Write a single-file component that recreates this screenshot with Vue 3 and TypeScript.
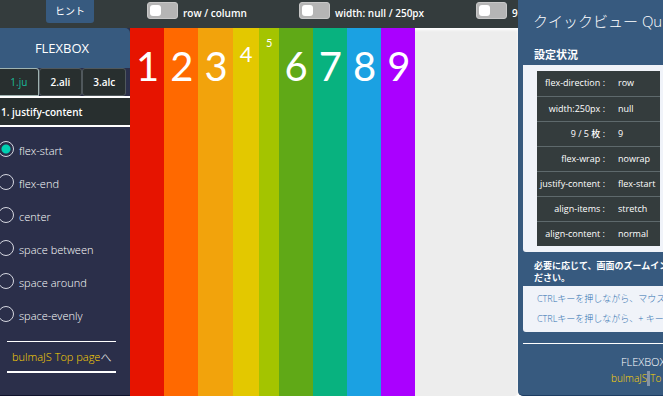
<script setup lang="ts">
import { ref } from 'vue'

interface Item { label: string; color: string; size: string }
interface Setting { name: string; value: string }

const switches = ref([
  { id: 'sw-direction', label: 'row / column', on: false },
  { id: 'sw-width', label: 'width: null / 250px', on: false },
  { id: 'sw-count', label: '9', on: false },
])

const tabs: string[] = ['1.ju', '2.ali', '3.alc']
const activeTab = ref(0)

const options: { value: string; text: string }[] = [
  { value: 'flex-start', text: 'flex-start' },
  { value: 'flex-end', text: 'flex-end' },
  { value: 'center', text: 'center' },
  { value: 'space-between', text: 'space between' },
  { value: 'space-around', text: 'space around' },
  { value: 'space-evenly', text: 'space-evenly' },
]
const justify = ref('flex-start')

const items: Item[] = [
  { label: '1', color: '#e61400', size: 'large' },
  { label: '2', color: '#ff6900', size: 'large' },
  { label: '3', color: '#f2a30c', size: 'large' },
  { label: '4', color: '#e3c800', size: 'medium' },
  { label: '5', color: '#a4c400', size: 'small' },
  { label: '6', color: '#60a917', size: 'large' },
  { label: '7', color: '#08b27f', size: 'large' },
  { label: '8', color: '#1ba1e2', size: 'large' },
  { label: '9', color: '#aa00ff', size: 'large' },
]

const settings: Setting[] = [
  { name: 'flex-direction', value: 'row' },
  { name: 'width:250px', value: 'null' },
  { name: '9 / 5 枚', value: '9' },
  { name: 'flex-wrap', value: 'nowrap' },
  { name: 'justify-content', value: 'flex-start' },
  { name: 'align-items', value: 'stretch' },
  { name: 'align-content', value: 'normal' },
]
</script>

<template>
  <div class="page">
    <div class="workspace">
      <header class="toolbar">
        <div class="hint-cell"><button type="button" class="hint">ヒント</button></div>
        <label v-for="s in switches" :key="s.id" class="switch" :for="s.id">
          <input :id="s.id" v-model="s.on" type="checkbox" role="switch" />
          <span>{{ s.label }}</span>
        </label>
      </header>

      <div class="body">
        <nav class="sidebar">
          <h1 class="side-title">FLEXBOX</h1>
          <div class="tabs">
            <button
              v-for="(t, i) in tabs"
              :key="t"
              type="button"
              :class="['tab', { active: i === activeTab }]"
              @click="activeTab = i"
            >{{ t }}</button>
          </div>
          <h2 class="section">1. justify-content</h2>
          <div class="radios">
            <label v-for="o in options" :key="o.value" class="radio" :for="o.value">
              <input :id="o.value" v-model="justify" type="radio" name="justify" :value="o.value" />
              <span>{{ o.text }}</span>
            </label>
          </div>
          <p class="top-link"><a href="#">bulmaJS Top page</a><span>へ</span></p>
        </nav>

        <main class="stage">
          <div
            v-for="item in items"
            :key="item.label"
            :class="['item', item.size]"
            :style="{ backgroundColor: item.color }"
          >{{ item.label }}</div>
        </main>
      </div>
    </div>

    <aside class="quickview">
      <h2 class="qv-title">クイックビュー Qu</h2>
      <section class="message">
        <h3 class="message-head">設定状況</h3>
        <div class="message-body">
          <table class="settings">
            <tbody>
              <tr v-for="s in settings" :key="s.name">
                <th scope="row">{{ s.name }} :</th>
                <td>{{ s.value }}</td>
              </tr>
            </tbody>
          </table>
        </div>
      </section>
      <section class="message">
        <h3 class="message-head note">必要に応じて、画面のズームイン<br />ださい。</h3>
        <div class="message-body tips">
          <p>CTRLキーを押しながら、マウス</p>
          <p>CTRLキーを押しながら、+ キー</p>
        </div>
      </section>
      <footer class="qv-foot">
        <p>FLEXBOX</p>
        <a href="#">bulmaJS<span class="caret"></span>To</a>
      </footer>
    </aside>
  </div>
</template>

<style>
body {
  margin: 0;
  background: #fff;
}
</style>

<style scoped>
* {
  box-sizing: border-box;
}

.page {
  display: flex;
  min-height: calc(100vh - 12px);
  margin-bottom: 12px;
  overflow: hidden;
  font-family: "Open Sans", "Noto Sans", "Noto Sans CJK JP", sans-serif;
  font-size: 10px;
  color: #fff;
}

h1, h2, h3, p {
  margin: 0;
}

button {
  font: inherit;
  color: inherit;
  border: 0;
  cursor: pointer;
}

.workspace {
  display: flex;
  flex: 1;
  flex-direction: column;
  min-width: 0;
  overflow: hidden;
}

.toolbar {
  display: flex;
  height: 28px;
  background: #343c3d;
  overflow: hidden;
}

.hint-cell {
  flex: 0 0 147px;
  padding-left: 46px;
}

.hint {
  width: 48px;
  height: 23px;
  padding: 0 0 3px;
  background: #375a7f;
  border-radius: 0 0 3px 3px;
}

.switch {
  display: flex;
  flex: 0 0 152px;
  gap: 5px;
  height: 25px;
  align-items: center;
  white-space: nowrap;
  font-weight: 600;
}

.switch + .switch {
  flex-basis: 177px;
}

.switch:last-child {
  flex-basis: auto;
}

.switch input {
  appearance: none;
  display: flex;
  width: 31px;
  height: 17px;
  margin: 0 0 4px;
  padding: 2px;
  background: #b5b5b5;
  border: 1px solid #c8c8c8;
  border-radius: 3px;
}

.switch input::before {
  content: "";
  width: 11px;
  height: 100%;
  background: #fff;
  border-radius: 3px;
}

.switch input:checked {
  justify-content: flex-end;
}

.body {
  display: flex;
  flex: 1;
}

.sidebar {
  flex: 0 0 130px;
  background: #2b2f4a;
  border-bottom: 1px solid #10132c;
}

.side-title {
  height: 40px;
  padding-right: 6px;
  background: #375a7f;
  border-radius: 0 5px 0 0;
  font-size: 13px;
  font-weight: 400;
  line-height: 40px;
  text-align: center;
}

.tabs {
  display: flex;
  height: 28px;
  padding-right: 4px;
}

.tab {
  flex: 1 1 43px;
  padding: 0;
  background: #282f2f;
  border: 1px solid #50585c;
  border-radius: 3px;
  font-weight: 600;
}

.tab.active {
  flex-basis: 38px;
  border-color: #9fb3b1;
  border-left: 0;
  border-radius: 0 3px 0 0;
  color: #1abc9c;
  font-weight: 400;
}

.section {
  height: 31px;
  padding-left: 1px;
  background: #282f2f;
  border-top: 2px solid #fff;
  border-bottom: 2px solid #fff;
  font-size: 10px;
  font-weight: 600;
  line-height: 29px;
}

.radios {
  padding-top: 7px;
}

.radio {
  display: flex;
  gap: 5px;
  height: 33px;
  align-items: center;
  font-size: 11px;
  font-weight: 300;
}

.radio input {
  appearance: none;
  flex: none;
  width: 16px;
  height: 16px;
  margin: 0 0 4px -2px;
  border: 1px solid #d5d7e0;
  border-radius: 50%;
}

.radio input:checked {
  background: radial-gradient(circle, #00d1b2 4px, transparent 5px);
}

.top-link {
  display: flex;
  height: 32px;
  margin: 9px 14px 22px 7px;
  padding-left: 5px;
  align-items: center;
  border-top: 1px solid #fff;
  border-bottom: 2px solid #fff;
  font-size: 11px;
  font-weight: 300;
  white-space: nowrap;
}

.top-link a {
  color: #ffd500;
  text-decoration: none;
}

.stage {
  display: flex;
  flex: 1;
  min-width: 0;
  background: #ededed;
  border-radius: 0 0 4px 0;
  box-shadow: inset 0 2px 3px #fff;
}

.item {
  flex: none;
  padding: 8px 5px 0 6px;
  font-family: Lato, sans-serif;
  font-size: 40px;
  line-height: 60px;
  text-align: center;
}

.item.medium {
  width: 26px;
  font-size: 22px;
  line-height: 36px;
}

.item.small {
  width: 20px;
  font-size: 11px;
  line-height: 14px;
}

.quickview {
  flex: 0 0 145px;
  align-self: flex-start;
  min-width: 0;
  padding: 0 0 8px 5px;
  overflow: hidden;
  background: #375a7f;
  border-bottom: 1px solid #1d3d63;
  border-radius: 0 0 0 5px;
  white-space: nowrap;
}

.qv-title {
  height: 44px;
  padding-left: 10px;
  font-size: 15px;
  font-weight: 300;
  line-height: 42px;
}

.message-head {
  height: 21px;
  padding-left: 11px;
  font-size: 11px;
  font-weight: 700;
  line-height: 21px;
}

.message-head.note {
  height: 34px;
  padding-top: 8px;
  font-size: 9px;
  line-height: 12px;
}

.message-body {
  padding: 6px 3px 6px 14px;
  background: #f0f3f9;
  border-radius: 0 0 0 3px;
}

.settings {
  width: 100%;
  border-collapse: collapse;
  background: #343c3d;
  font-size: 9px;
  line-height: 12px;
}

.settings tr {
  height: 25px;
}

.settings tr + tr {
  border-top: 1px solid #5e696c;
}

.settings th {
  width: 68px;
  padding: 0;
  font-weight: 500;
  text-align: right;
}

.settings td {
  padding: 0 0 0 13px;
  font-weight: 400;
}

.message-body.tips {
  padding: 3px 0 3px 14px;
  color: #2f6fb0;
  font-size: 9px;
  font-weight: 300;
  line-height: 20px;
}

.qv-foot {
  margin-top: 11px;
  padding-top: 9px;
  border-top: 1px solid #fff;
  font-size: 11px;
  font-weight: 300;
  line-height: 17px;
}

.qv-foot p {
  padding-left: 98px;
}

.qv-foot a {
  display: flex;
  padding-left: 88px;
  align-items: center;
  color: #ffd500;
  font-size: 10px;
  text-decoration: none;
}

.caret {
  width: 3px;
  height: 15px;
  background: #8493a6;
}
</style>
